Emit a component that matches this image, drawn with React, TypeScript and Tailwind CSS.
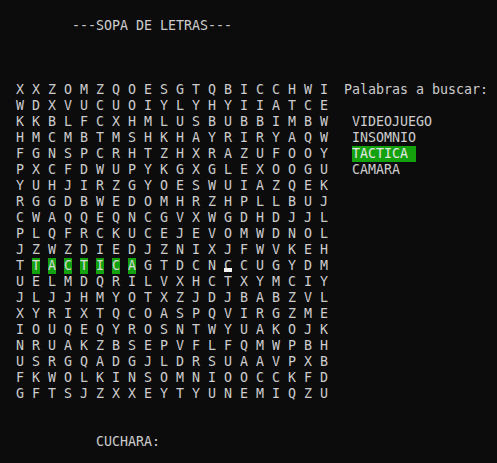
const grid = [
  "XXZOMZQOESGTQBICCHWI",
  "WDXVUCUOIYLYHYIIATCE",
  "KKBLFCXHMLUSBUBBIMBW",
  "HMCMBTMSHKHAYRIRYAQW",
  "FGNSPCRHTZHXRAZUFOOY",
  "PXCFDWUPYKGXGLEXOOGU",
  "YUHJIRZGYOESWUIAZQEK",
  "RGGDBWEDOMHRZHPLLBUJ",
  "CWAQQEQNCGVXWGDHDJJL",
  "PLQFRCKUCEJEVOMWDNOL",
  "JZWZDIEDJZNIXJFWVKEH",
  "TTACTICAGTDCNCCUGYDM",
  "UELMDQRILVXHCTXYMCIY",
  "JLJJHMYOTXZJDJBABZVL",
  "XYRIXTQCOASPQVIRGZME",
  "IOUQEQYROSNTWYUAKOJK",
  "NRUAKZBSEPVFLFQMWPBH",
  "USRGQADGJLDRSUAAVPXB",
  "FKWOLKINSOMNIOOCCKFD",
  "GFTSJZXXEYTYUNEMIQZU",
];

type Word = { text: string; found: boolean };
const words: Word[] = [
  { text: "VIDEOJUEGO", found: false },
  { text: "INSOMNIO", found: false },
  { text: "TACTICA ", found: true },
  { text: "CAMARA", found: false },
];

// row 11, columns 1..7 are the found word
const isFound = (r: number, c: number) => r === 11 && c >= 1 && c <= 7;
const hasCursor = (r: number, c: number) => r === 11 && c === 13;

const Side = ({ row }: { row: number }) => {
  if (row === 0) return <span className="ml-[8px] whitespace-pre">Palabras a buscar:</span>;
  const w = words[row - 2];
  if (!w) return null;
  return (
    <span
      className={
        w.found
          ? "ml-[16px] whitespace-pre bg-[#13a10e] text-[#e6e6e6]"
          : "ml-[16px] whitespace-pre"
      }
    >
      {w.text}
    </span>
  );
};

export default function App() {
  return (
    <div
      className="w-[497px] h-[463px] overflow-hidden bg-[#0c0c0c] text-[#cccccc] pt-[18px] text-[13.3px] leading-[16px]"
      style={{ fontFamily: '"DejaVu Sans Mono", "Liberation Mono", monospace' }}
    >
      <div className="h-[16px] pl-[72px] whitespace-pre">---SOPA DE LETRAS---</div>
      <div className="h-[48px]" />
      {grid.map((line, r) => (
        <div key={r} className="flex h-[16px] pl-[16px]">
          {line.split("").map((ch, c) => (
            <div key={c} className="w-[16px] h-[16px] flex">
              <span
                className={
                  isFound(r, c)
                    ? "relative w-[8px] h-[16px] text-center bg-[#13a10e] text-[#d9d9d9]"
                    : "relative w-[8px] h-[16px] text-center"
                }
              >
                {ch}
                {hasCursor(r, c) && (
                  <span className="absolute left-0 bottom-[2px] w-[8px] h-[4px] bg-[#f2f2f2]" />
                )}
              </span>
            </div>
          ))}
          <Side row={r} />
        </div>
      ))}
      <div className="h-[32px]" />
      <div className="h-[16px] pl-[96px] whitespace-pre">CUCHARA:</div>
    </div>
  );
}
